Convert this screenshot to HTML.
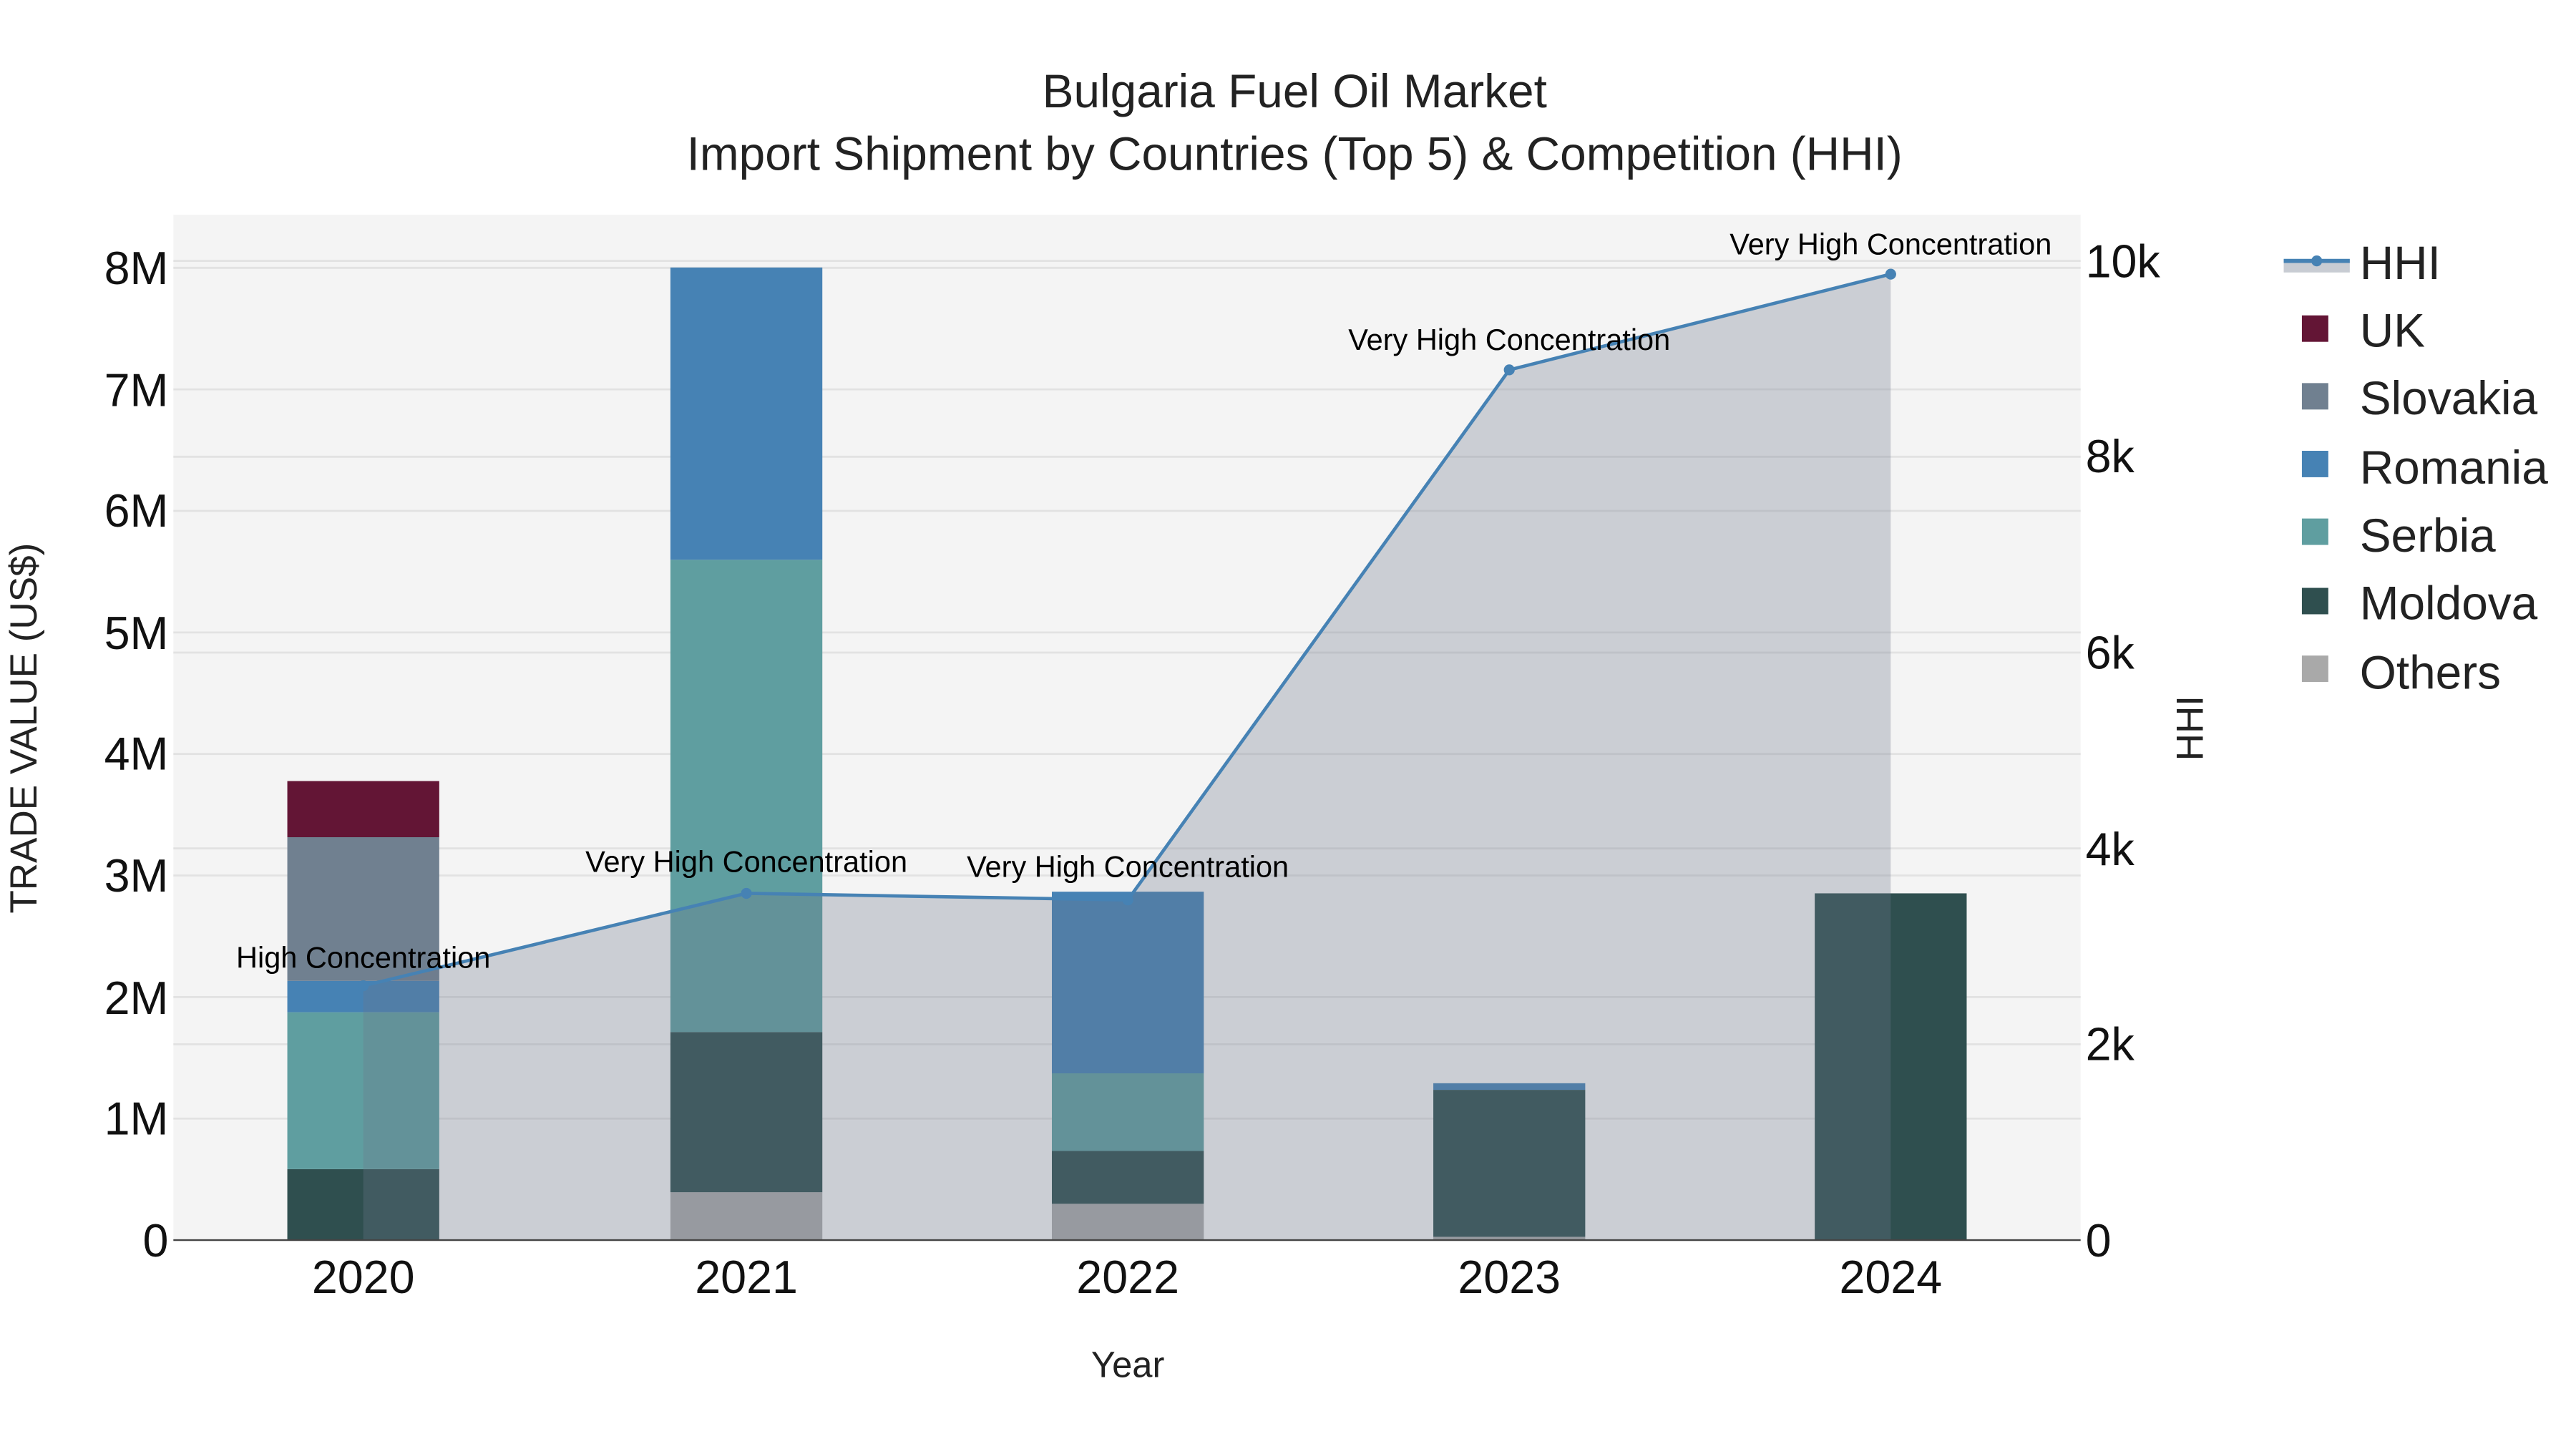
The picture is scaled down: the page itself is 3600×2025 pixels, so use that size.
<!DOCTYPE html>
<html><head><meta charset="utf-8"><style>
html,body{margin:0;padding:0;background:#fff;}
svg{display:block;font-family:"Liberation Sans",sans-serif;}
</style></head><body>
<svg width="3600" height="2025" viewBox="0 0 1560 877.5" xmlns="http://www.w3.org/2000/svg">
<rect x="0" y="0" width="1560" height="877.5" fill="#fff"/>
<rect x="105" y="130" width="1155" height="621" fill="#f4f4f4"/>
<g stroke="#e2e2e2" stroke-width="1.2">
<line x1="105" x2="1260" y1="677.4" y2="677.4"/><line x1="105" x2="1260" y1="603.8" y2="603.8"/>
<line x1="105" x2="1260" y1="530.2" y2="530.2"/><line x1="105" x2="1260" y1="456.6" y2="456.6"/>
<line x1="105" x2="1260" y1="383" y2="383"/><line x1="105" x2="1260" y1="309.4" y2="309.4"/>
<line x1="105" x2="1260" y1="235.8" y2="235.8"/><line x1="105" x2="1260" y1="162.2" y2="162.2"/>
<line x1="105" x2="1260" y1="632.4" y2="632.4"/><line x1="105" x2="1260" y1="513.8" y2="513.8"/>
<line x1="105" x2="1260" y1="395.2" y2="395.2"/><line x1="105" x2="1260" y1="276.6" y2="276.6"/>
<line x1="105" x2="1260" y1="158" y2="158"/>
</g>
<g>
<rect x="174" y="708" width="92" height="43" fill="#2f4f4f"/>
<rect x="174" y="613" width="92" height="95" fill="#5f9ea0"/>
<rect x="174" y="594" width="92" height="19" fill="#4682b4"/>
<rect x="174" y="507" width="92" height="87" fill="#708090"/>
<rect x="174" y="473" width="92" height="34" fill="#631535"/>

<rect x="406" y="722" width="92" height="29" fill="#a9a9a9"/>
<rect x="406" y="625" width="92" height="97" fill="#2f4f4f"/>
<rect x="406" y="339" width="92" height="286" fill="#5f9ea0"/>
<rect x="406" y="162" width="92" height="177" fill="#4682b4"/>

<rect x="637" y="729" width="92" height="22" fill="#a9a9a9"/>
<rect x="637" y="697" width="92" height="32" fill="#2f4f4f"/>
<rect x="637" y="650" width="92" height="47" fill="#5f9ea0"/>
<rect x="637" y="540" width="92" height="110" fill="#4682b4"/>

<rect x="868" y="749" width="92" height="2" fill="#a9a9a9"/>
<rect x="868" y="660" width="92" height="89" fill="#2f4f4f"/>
<rect x="868" y="656" width="92" height="4" fill="#4682b4"/>

<rect x="1099" y="541" width="92" height="210" fill="#2f4f4f"/>
</g>
<polygon points="220,751 220,597 452,541 683,545 914,224 1145,166 1145,751" fill="#6e788c" fill-opacity="0.3"/>
<polyline points="220,597 452,541 683,545 914,224 1145,166" fill="none" stroke="#4682b4" stroke-width="2"/>
<g fill="#4682b4"><circle cx="220" cy="597" r="3.3"/><circle cx="452" cy="541" r="3.3"/><circle cx="683" cy="545" r="3.3"/><circle cx="914" cy="224" r="3.3"/><circle cx="1145" cy="166" r="3.3"/></g>
<line x1="105" x2="1260" y1="751" y2="751" stroke="#444" stroke-width="1"/>
<g font-size="18" fill="#000" text-anchor="middle">
<text x="220" y="586">High Concentration</text>
<text x="452" y="528">Very High Concentration</text>
<text x="683" y="531">Very High Concentration</text>
<text x="914" y="212">Very High Concentration</text>
<text x="1145" y="154">Very High Concentration</text>
</g>
<g font-size="28" fill="#111" text-anchor="end">
<text x="102" y="761">0</text><text x="102" y="687">1M</text><text x="102" y="614">2M</text>
<text x="102" y="540">3M</text><text x="102" y="466">4M</text><text x="102" y="393">5M</text>
<text x="102" y="319">6M</text><text x="102" y="246">7M</text><text x="102" y="172">8M</text>
</g>
<g font-size="28" fill="#111">
<text x="1263" y="761">0</text><text x="1263" y="642">2k</text><text x="1263" y="524">4k</text>
<text x="1263" y="405">6k</text><text x="1263" y="286">8k</text><text x="1263" y="168">10k</text>
</g>
<g font-size="28" fill="#111" text-anchor="middle">
<text x="220" y="783">2020</text><text x="452" y="783">2021</text><text x="683" y="783">2022</text>
<text x="914" y="783">2023</text><text x="1145" y="783">2024</text>
</g>
<text x="683" y="834" font-size="22" fill="#222" text-anchor="middle">Year</text>
<text transform="translate(22,441) rotate(-90)" font-size="23" fill="#222" text-anchor="middle">TRADE VALUE (US$)</text>
<text transform="translate(1334,441) rotate(-90)" font-size="23" fill="#222" text-anchor="middle">HHI</text>
<g font-size="28.5" fill="#222" text-anchor="middle">
<text x="784" y="65">Bulgaria Fuel Oil Market</text>
<text x="784" y="103">Import Shipment by Countries (Top 5) &amp; Competition (HHI)</text>
</g>
<rect x="1383" y="157" width="40" height="8" fill="#c8ccd3"/>
<line x1="1383" x2="1423" y1="158" y2="158" stroke="#4682b4" stroke-width="2.5"/>
<circle cx="1403" cy="158" r="3.3" fill="#4682b4"/>
<rect x="1394" y="191" width="16" height="16" fill="#631535"/>
<rect x="1394" y="232" width="16" height="16" fill="#708090"/>
<rect x="1394" y="273" width="16" height="16" fill="#4682b4"/>
<rect x="1394" y="314" width="16" height="16" fill="#5f9ea0"/>
<rect x="1394" y="356" width="16" height="16" fill="#2f4f4f"/>
<rect x="1394" y="397" width="16" height="16" fill="#a9a9a9"/>
<g font-size="28.5" fill="#222">
<text x="1429" y="169">HHI</text><text x="1429" y="210">UK</text><text x="1429" y="251">Slovakia</text>
<text x="1429" y="293">Romania</text><text x="1429" y="334">Serbia</text><text x="1429" y="375">Moldova</text>
<text x="1429" y="417">Others</text>
</g>
</svg>
</body></html>
